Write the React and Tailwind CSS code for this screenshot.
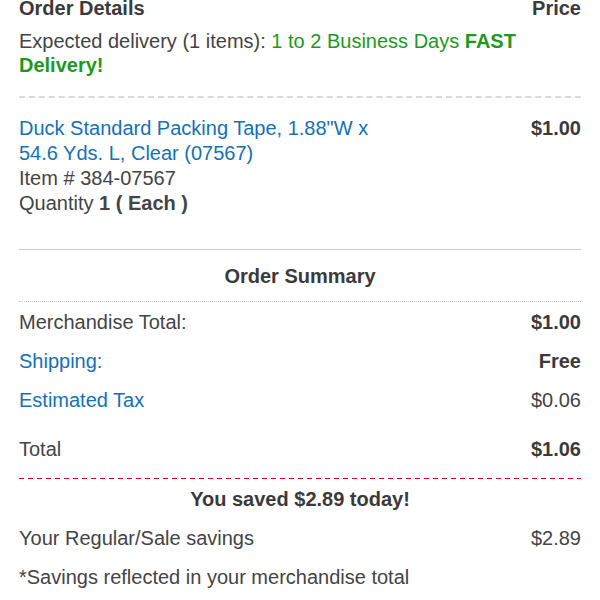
export default function App() {
  return (
    <div className="w-[600px] h-[600px] overflow-hidden bg-white px-[19px] text-[20px] leading-[24px] text-[#444] font-['Liberation_Sans',Arial,sans-serif]">
      {/* Order details header */}
      <div className="-mt-[4px] flex justify-between font-bold text-[#3a3a3a]">
        <span>Order Details</span>
        <span>Price</span>
      </div>
      <p className="mt-[9px] pr-[40px]">
        Expected delivery (1 items):{' '}
        <span className="text-[#1c9a1c]">1 to 2 Business Days </span>
        <span className="font-bold text-[#1c9a1c]">FAST Delivery!</span>
      </p>
      <div className="mt-[19px] border-t-2 border-dashed border-[#dadada]"></div>

      {/* Line item */}
      <div className="mt-[18px] flex justify-between leading-[25px]">
        <div>
          <a className="block w-[385px] text-[#1570b6]">
            Duck Standard Packing Tape, 1.88"W x 54.6 Yds. L, Clear (07567)
          </a>
          <p>Item # 384-07567</p>
          <p>
            Quantity <span className="font-bold">1 ( Each )</span>
          </p>
        </div>
        <span className="font-bold text-[#3a3a3a]">$1.00</span>
      </div>
      <div className="mt-[33px] border-t border-[#c8c8c8]"></div>

      {/* Order summary */}
      <h2 className="pt-[14px] text-center font-bold text-[#3a3a3a]">Order Summary</h2>
      <div className="mt-[13px] border-t border-dotted border-[#c4c4c4]"></div>
      <div className="flex h-[39px] items-center justify-between pt-[1px]">
        <span>Merchandise Total:</span>
        <span className="font-bold text-[#3a3a3a]">$1.00</span>
      </div>
      <div className="flex h-[39px] items-center justify-between pt-[1px]">
        <span className="text-[#1570b6]">Shipping:</span>
        <span className="font-bold text-[#3a3a3a]">Free</span>
      </div>
      <div className="flex h-[39px] items-center justify-between pt-[1px]">
        <span className="text-[#1570b6]">Estimated Tax</span>
        <span>$0.06</span>
      </div>
      <div className="mt-[10px] flex h-[39px] items-center justify-between pt-[1px]">
        <span>Total</span>
        <span className="font-bold text-[#3a3a3a]">$1.06</span>
      </div>
      <div className="mt-[10px] h-px bg-[repeating-linear-gradient(90deg,#d0021b_0_5px,transparent_5px_9px)]"></div>

      {/* Savings */}
      <div className="flex h-[39px] items-center justify-center pt-[1px] font-bold text-[#3a3a3a]">
        You saved $2.89 today!
      </div>
      <div className="flex h-[39px] items-center justify-between pt-[1px]">
        <span>Your Regular/Sale savings</span>
        <span>$2.89</span>
      </div>
      <div className="flex h-[39px] items-center pt-[1px]">*Savings reflected in your merchandise total</div>
    </div>
  )
}
